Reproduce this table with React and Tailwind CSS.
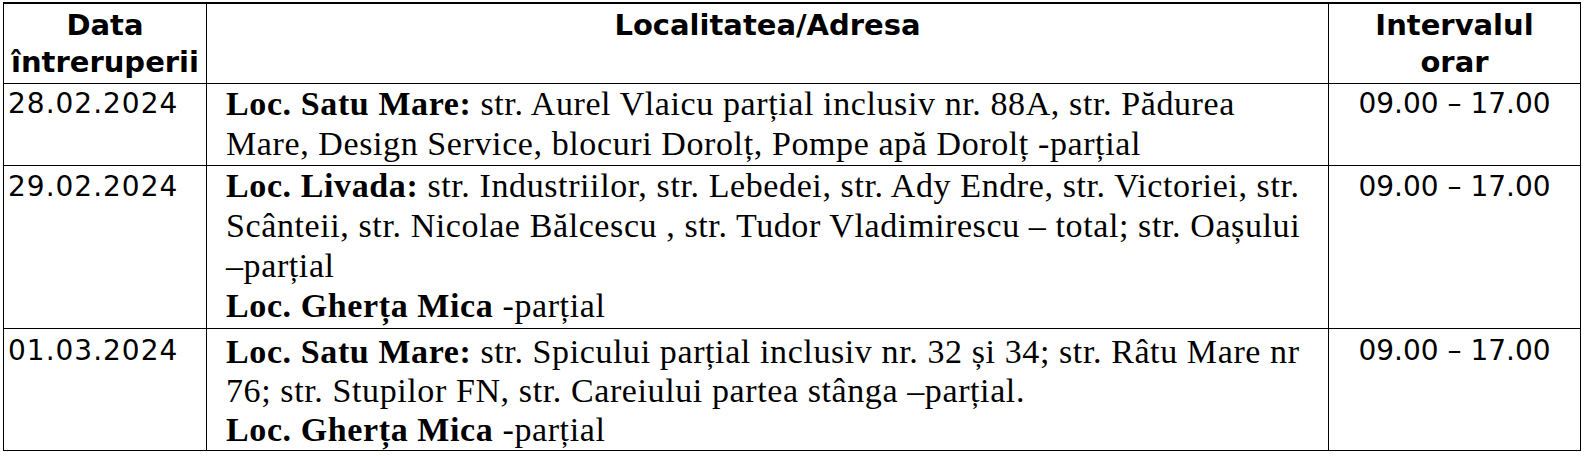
import React from "react";

const serif = "font-['Liberation_Serif','Times_New_Roman',serif]";
const sans = "font-['DejaVu_Sans','Verdana',sans-serif]";

function B({ children }) {
  return <span className="font-bold">{children}</span>;
}

export default function App() {
  return (
    <div className="w-[1588px] h-[456px] bg-white text-black overflow-hidden">
      <table className="ml-[3px] mt-[2px] w-[1577px] table-fixed border-collapse border-t-2 border-black">
        <colgroup>
          <col className="w-[203px]" />
          <col className="w-[1122px]" />
          <col className="w-[252px]" />
        </colgroup>
        <thead>
          <tr className="h-[80px]">
            <th className={`border border-black border-t-2 align-top p-0 pt-[3px] ${sans} text-[29px] leading-[37px] font-bold text-center`}>
              Data
              <br />
              întreruperii
            </th>
            <th className={`border border-black border-t-2 align-top p-0 pt-[3px] ${sans} text-[29px] leading-[37px] font-bold text-center`}>
              Localitatea/Adresa
            </th>
            <th className={`border border-black border-t-2 align-top p-0 pt-[3px] ${sans} text-[29px] leading-[37px] font-bold text-center`}>
              Intervalul
              <br />
              orar
            </th>
          </tr>
        </thead>
        <tbody>
          <tr className="h-[82px]">
            <td className={`border border-black align-top p-0 pt-[2px] pl-[4px] ${sans} text-[28px] leading-[36px] tracking-[1px]`}>
              28.02.2024
            </td>
            <td className={`border border-black align-top p-0 pt-[0px] pl-[19px] ${serif} text-[34px] leading-[40px] tracking-[0.6px] whitespace-nowrap`}>
              <B>Loc. Satu Mare:</B> str. Aurel Vlaicu parțial inclusiv nr. 88A, str. Pădurea
              <br />
              Mare, Design Service, blocuri Dorolț, Pompe apă Dorolț -parțial
            </td>
            <td className={`border border-black align-top p-0 pt-[2px] text-center ${sans} text-[28px] leading-[36px]`}>
              09.00 – 17.00
            </td>
          </tr>
          <tr className="h-[163px]">
            <td className={`border border-black align-top p-0 pt-[3px] pl-[4px] ${sans} text-[28px] leading-[36px] tracking-[1px]`}>
              29.02.2024
            </td>
            <td className={`border border-black align-top p-0 pt-[0px] pl-[19px] ${serif} text-[34px] leading-[40px] tracking-[0.6px] whitespace-nowrap`}>
              <B>Loc. Livada:</B> str. Industriilor, str. Lebedei, str. Ady Endre, str. Victoriei, str.
              <br />
              Scânteii, str. Nicolae Bălcescu , str. Tudor Vladimirescu – total; str. Oașului
              <br />
              –parțial
              <br />
              <B>Loc. Gherța Mica</B> -parțial
            </td>
            <td className={`border border-black align-top p-0 pt-[3px] text-center ${sans} text-[28px] leading-[36px]`}>
              09.00 – 17.00
            </td>
          </tr>
          <tr className="h-[122px]">
            <td className={`border border-black align-top p-0 pt-[4px] pl-[4px] ${sans} text-[28px] leading-[36px] tracking-[1px]`}>
              01.03.2024
            </td>
            <td className={`border border-black align-top p-0 pt-[3px] pl-[19px] ${serif} text-[34px] leading-[39px] tracking-[0.6px] whitespace-nowrap`}>
              <B>Loc. Satu Mare:</B> str. Spicului parțial inclusiv nr. 32 și 34; str. Râtu Mare nr
              <br />
              76; str. Stupilor FN, str. Careiului partea stânga –parțial.
              <br />
              <B>Loc. Gherța Mica</B> -parțial
            </td>
            <td className={`border border-black align-top p-0 pt-[4px] text-center ${sans} text-[28px] leading-[36px]`}>
              09.00 – 17.00
            </td>
          </tr>
        </tbody>
      </table>
    </div>
  );
}
